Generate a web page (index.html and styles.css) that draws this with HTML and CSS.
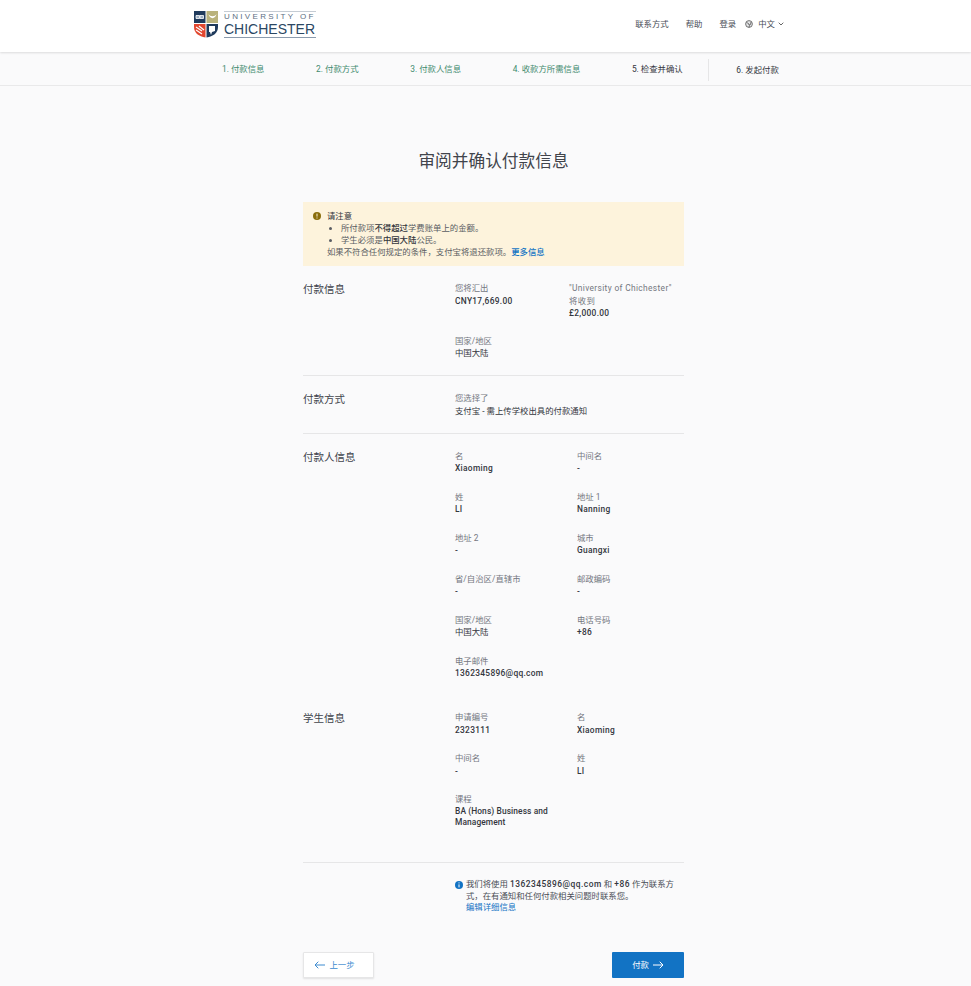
FILE: index.html
```html
<!DOCTYPE html>
<html lang="zh">
<head>
<meta charset="utf-8" />
<title>审阅并确认付款信息</title>
<link rel="stylesheet" href="styles.css">
</head>
<body>
<header class="top">
	<div class="logo">
		<svg class="crest" width="24" height="27" viewBox="0 0 24 27">
			<path d="M0 0h11.500v12H0z" fill="#1f3a5c"/>
			<path d="M12.500 0H24v12H12.500z" fill="#b9b27c"/>
			<path d="M0 13h11.500v13.500C5 25.500 0 22 0 16z" fill="#e2472f"/>
			<path d="M12.500 13H24v3c0 6-5 9.500-11.500 10.500z" fill="#1f3a5c"/>
			<path d="M2 4.500h3.500v3H2zM6 4.500h3.500v3H6z" fill="#9fb0c4" stroke="#fff" stroke-width=".8"/>
			<path d="M14.500 3c1 5.500 7 5.500 8 0-1.500 3-6.500 3-8 0z" fill="#fff"/>
			<path d="M2 16l6 4M2 19l6 4M5 15l5 4" stroke="#fff" stroke-width="1.200"/>
			<path d="M15 15h6v5l-3 1-1 3-1-3h-1z" fill="#fff"/>
		</svg>
		<div class="wordmark">
			<span class="uni">UNIVERSITY OF</span>
			<span class="chi">CHICHESTER</span>
		</div>
	</div>
	<nav class="nav">
		<a>联系方式</a>
		<a>帮助</a>
		<a>登录</a>
		<span class="lang">
			<svg width="8" height="8" viewBox="0 0 8 8"><circle cx="4" cy="4" r="3.400" fill="#e4e5e7" stroke="#555" stroke-width=".8"/><path d="M1.500 2.500l2 1 .5 1.500 1.500-.5.500-2.500M4 7.300l.5-2" fill="none" stroke="#555" stroke-width=".8"/></svg>
			<span>中文</span>
			<svg width="6" height="4" viewBox="0 0 6 4"><path d="M.7.7L3 3l2.300-2.300" fill="none" stroke="#555" stroke-width=".9"/></svg>
		</span>
	</nav>
</header>

<div class="steps">
	<span class="done">1. 付款信息</span>
	<span class="done">2. 付款方式</span>
	<span class="done">3. 付款人信息</span>
	<span class="done">4. 收款方所需信息</span>
	<span class="cur">5. 检查并确认</span>
	<span class="next">6. 发起付款</span>
</div>

<main class="page">
	<h1>审阅并确认付款信息</h1>

	<div class="notice">
		<svg class="ic" width="8" height="8" viewBox="0 0 8 8"><circle cx="4" cy="4" r="4" fill="#8a6d0b"/><path d="M4 1.600v3M4 5.500v1" stroke="#fdf3dc" stroke-width="1"/></svg>
		<div>
			<div class="notice-title">请注意</div>
			<ul>
				<li>所付款项<b>不得超过</b>学费账单上的金额。</li>
				<li>学生必须是<b>中国大陆</b>公民。</li>
			</ul>
			<div>如果不符合任何规定的条件，支付宝将退还款项。<a class="more">更多信息</a></div>
		</div>
	</div>

	<section class="sec first">
		<h2>付款信息</h2>
		<div class="grid tight">
			<div class="f"><label>您将汇出</label><b>CNY17,669.00</b></div>
			<div class="f"><label class="wide">"University of Chichester"<br>将收到</label><b>£2,000.00</b></div>
			<div class="f"><label>国家/地区</label><b class="cn">中国大陆</b></div>
		</div>
	</section>

	<section class="sec method">
		<h2>付款方式</h2>
		<div class="single">
			<label>您选择了</label>
			<p>支付宝 - 需上传学校出具的付款通知</p>
		</div>
	</section>

	<section class="sec payer">
		<h2>付款人信息</h2>
		<div class="grid">
			<div class="f"><label>名</label><b>Xiaoming</b></div>
			<div class="f"><label>中间名</label><b>-</b></div>
			<div class="f"><label>姓</label><b>LI</b></div>
			<div class="f"><label>地址 1</label><b>Nanning</b></div>
			<div class="f"><label>地址 2</label><b>-</b></div>
			<div class="f"><label>城市</label><b>Guangxi</b></div>
			<div class="f"><label>省/自治区/直辖市</label><b>-</b></div>
			<div class="f"><label>邮政编码</label><b>-</b></div>
			<div class="f"><label>国家/地区</label><b class="cn">中国大陆</b></div>
			<div class="f"><label>电话号码</label><b>+86</b></div>
			<div class="f"><label>电子邮件</label><b>1362345896@qq.com</b></div>
		</div>
	</section>

	<section class="sec student">
		<h2>学生信息</h2>
		<div class="grid">
			<div class="f"><label>申请编号</label><b>2323111</b></div>
			<div class="f"><label>名</label><b>Xiaoming</b></div>
			<div class="f"><label>中间名</label><b>-</b></div>
			<div class="f"><label>姓</label><b>LI</b></div>
			<div class="f"><label>课程</label><b class="course">BA (Hons) Business and Management</b></div>
		</div>
	</section>

	<div class="contact">
		<svg class="ic" width="8" height="8" viewBox="0 0 8 8"><circle cx="4" cy="4" r="4" fill="#1273c4"/><path d="M4 1.400v1M4 3.400v3" stroke="#fff" stroke-width="1"/></svg>
		<div>
			我们将使用 <b>1362345896@qq.com</b> 和 <b>+86</b> 作为联系方式，在有通知和任何付款相关问题时联系您。<br>
			<a class="edit">编辑详细信息</a>
		</div>
	</div>

	<div class="actions">
		<button class="btn back">
			<svg width="11" height="8" viewBox="0 0 11 8"><path d="M11 4H1M4.300.7L1 4l3.300 3.300" fill="none" stroke="#3d8bd0" stroke-width="1"/></svg>
			上一步
		</button>
		<button class="btn pay">
			付款
			<svg width="11" height="8" viewBox="0 0 11 8"><path d="M0 4H10M6.700.7L10 4 6.700 7.300" fill="none" stroke="#fff" stroke-width="1"/></svg>
		</button>
	</div>
</main>
</body>
</html>
```

FILE: styles.css
```css
html, body {
	margin: 0;
	padding: 0;
}
body {
	background: #fafafb;
	color: #44474f;
	font-family: Roboto, "Noto Sans CJK SC", sans-serif;
	font-size: 8.400px;
	line-height: 12.500px;
	height: 986px;
	overflow: hidden;
}

/* header */
.top {
	height: 52px;
	box-sizing: border-box;
	background: #fff;
	display: flex;
	align-items: center;
	justify-content: space-between;
	padding: 0 187px 4px 194px;
	box-shadow: 0 1px 2px rgba(0,0,0,.12);
	position: relative;
}
.logo {
	display: flex;
	gap: 6px;
	align-items: center;
}
.crest {
	display: block;
}
.wordmark {
	border-top: 1px solid #c5ccd4;
	border-bottom: 1px solid #8b9bad;
	width: 92px;
	height: 27px;
	box-sizing: border-box;
	display: flex;
	flex-direction: column;
	font-family: "Liberation Sans", sans-serif;
	color: #2b4763;
}
.uni {
	font-size: 8px;
	line-height: 10px;
	letter-spacing: 2.350px;
	white-space: nowrap;
	color: #5c6f84;
}
.chi {
	font-size: 14px;
	line-height: 14px;
	white-space: nowrap;
}
.nav {
	display: flex;
	gap: 17px;
	align-items: center;
	color: #4a4e57;
}
.lang {
	display: flex;
	align-items: center;
	gap: 5px;
	margin-left: -8px;
}
.lang span {
	margin-right: -2px;
}

/* steps */
.steps {
	height: 34px;
	box-sizing: border-box;
	padding: 2px 0 0 222px;
	display: flex;
	align-items: center;
	gap: 51.600px;
	border-bottom: 1px solid #e9e9ea;
}
.steps .done {
	color: #3f8a6e;
}
.steps .cur {
	color: #33363d;
}
.steps .next {
	color: #33363d;
	margin-left: -26px;
	padding-left: 27px;
	border-left: 1px solid #e6e6e7;
	line-height: 22px;
}

/* body */
.page {
	width: 381px;
	margin-left: 303px;
}
h1 {
	margin: 0;
	padding-top: 64px;
	text-align: center;
	font-size: 16.700px;
	line-height: 24px;
	font-weight: 400;
	color: #41444b;
}
.notice {
	margin-top: 28px;
	height: 64px;
	box-sizing: border-box;
	background: #fdf3dc;
	padding: 8px 10px;
	display: flex;
	gap: 6px;
	line-height: 12px;
	color: #5a5d63;
}
.ic {
	flex: none;
	margin-top: 2px;
}
.notice-title {
	color: #33363d;
}
.notice ul {
	margin: 0;
	padding: 0 0 0 14px;
}
.notice b {
	font-weight: 500;
	color: #33363d;
}
.f b {
	display: block;
	font-weight: 500;
	letter-spacing: .3px;
	color: #33363d;
}
.contact b {
	font-weight: 500;
	letter-spacing: .5px;
	color: #33363d;
}
.f .cn {
	font-weight: 400;
	letter-spacing: 0;
}
.more {
	color: #1273c4;
	font-weight: 500;
}
.sec {
	display: flex;
}
.sec h2 {
	margin: 0;
	width: 152px;
	flex: none;
	font-size: 10.500px;
	line-height: 16px;
	font-weight: 400;
	color: #41444b;
}
.grid {
	display: grid;
	grid-template-columns: 122px 107px;
	row-gap: 16px;
	align-content: start;
}
.tight {
	grid-template-columns: 114px 115px;
	row-gap: 15px;
}
.wide {
	white-space: nowrap;
	letter-spacing: .35px;
}
.f label, .single label {
	display: block;
	color: #74777f;
}
.course {
	width: 100px;
	line-height: 11px;
	letter-spacing: .1px !important;
}
.single p {
	margin: 0;
	color: #33363d;
}
.first {
	padding-top: 16px;
	height: 93px;
	border-bottom: 1px solid #e6e6e7;
}
.method {
	padding-top: 16px;
	height: 41px;
	border-bottom: 1px solid #e6e6e7;
}
.payer {
	padding-top: 15.500px;
	height: 261.500px;
}
.student {
	height: 151px;
	border-bottom: 1px solid #e6e6e7;
}
.contact {
	display: flex;
	gap: 3px;
	padding: 16px 5px 0 152px;
	line-height: 11.500px;
	color: #4a4e57;
	height: 73px;
}
.edit {
	color: #1273c4;
}
.actions {
	display: flex;
	justify-content: space-between;
}
.btn {
	height: 26px;
	font: inherit;
	display: flex;
	align-items: center;
	justify-content: center;
	gap: 4px;
	border-radius: 1px;
	padding: 0;
}
.back {
	width: 71px;
	background: #fff;
	border: 1px solid #e6e6e7;
	color: #3d8bd0;
	padding-right: 8px;
	box-shadow: 0 1px 2px rgba(0,0,0,.1);
}
.pay {
	width: 72px;
	background: #1273c4;
	border: 0;
	color: #fff;
}
```
